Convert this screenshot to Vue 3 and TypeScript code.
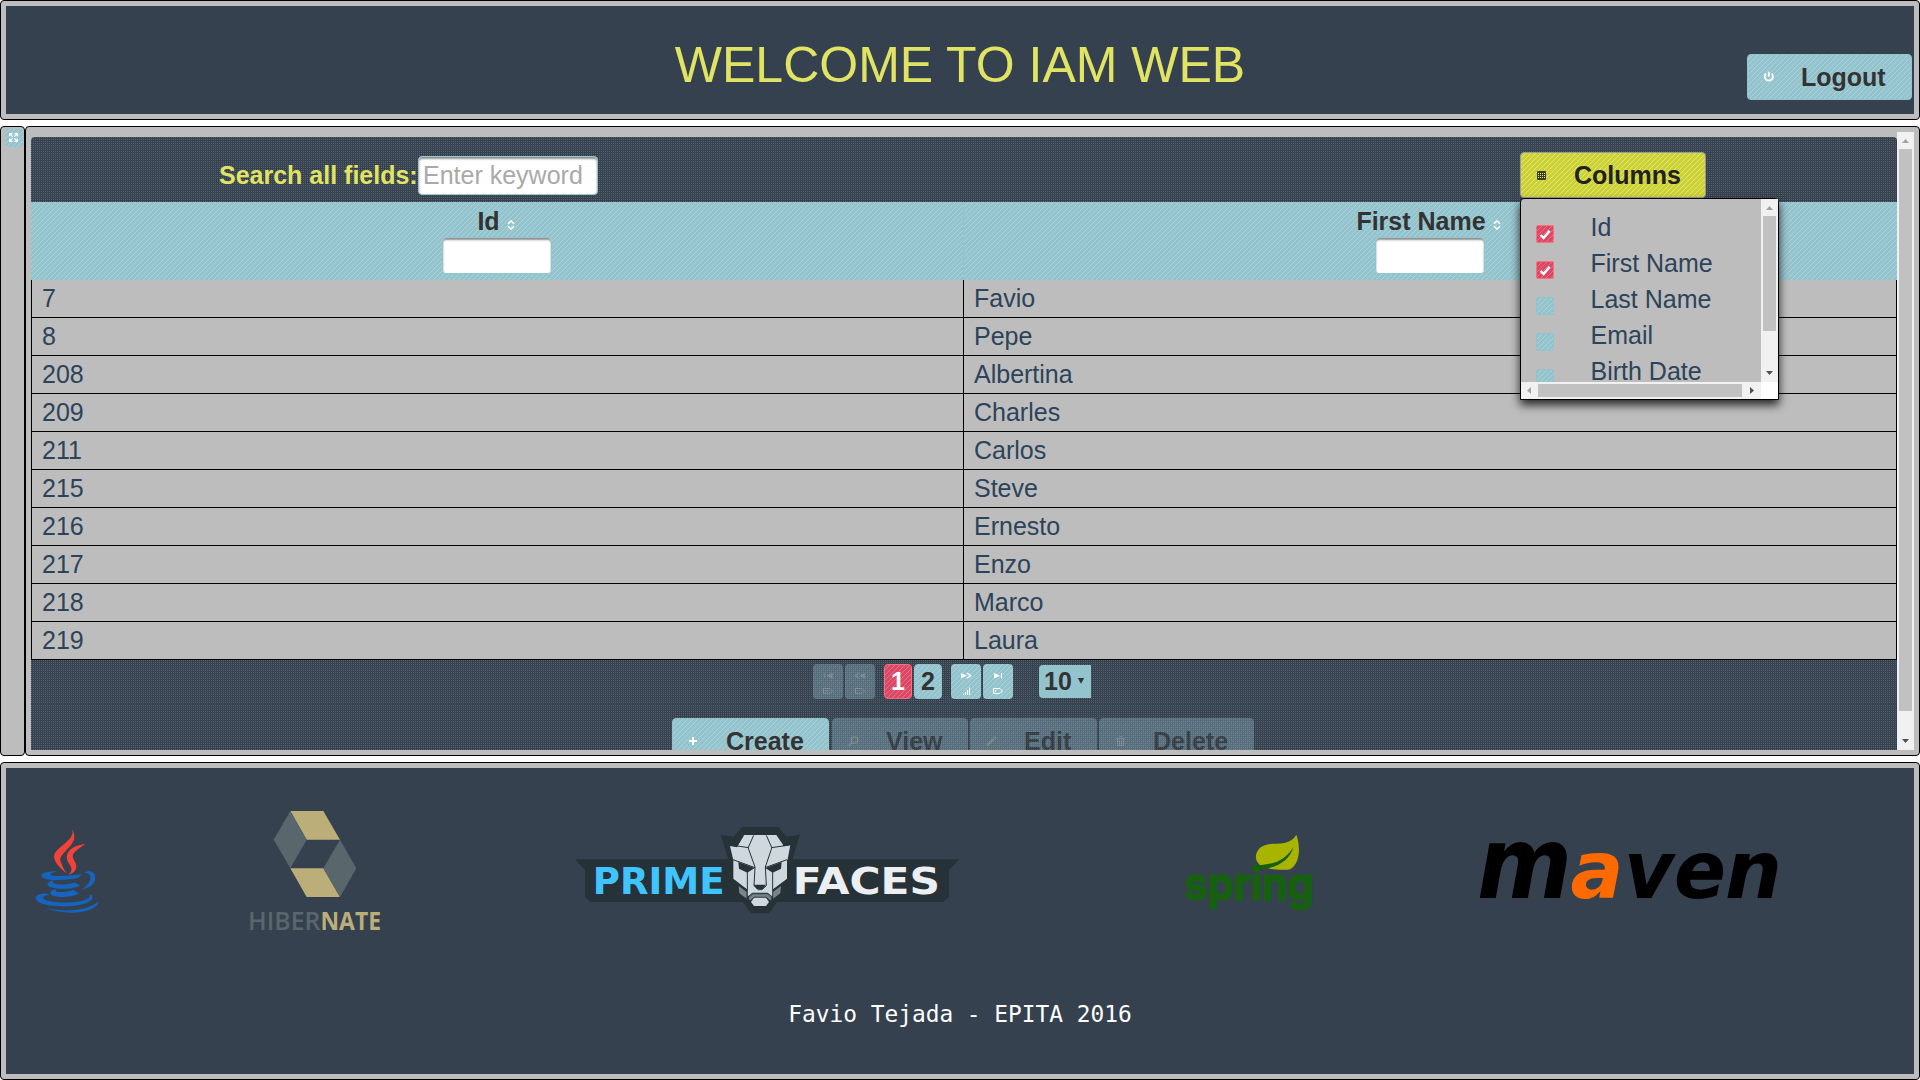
<script setup lang="ts">
interface Person {
  id: number
  firstName: string
}

interface ColumnOption {
  label: string
  checked: boolean
}

const people: Person[] = [
  { id: 7, firstName: 'Favio' },
  { id: 8, firstName: 'Pepe' },
  { id: 208, firstName: 'Albertina' },
  { id: 209, firstName: 'Charles' },
  { id: 211, firstName: 'Carlos' },
  { id: 215, firstName: 'Steve' },
  { id: 216, firstName: 'Ernesto' },
  { id: 217, firstName: 'Enzo' },
  { id: 218, firstName: 'Marco' },
  { id: 219, firstName: 'Laura' },
]

const columnOptions: ColumnOption[] = [
  { label: 'Id', checked: true },
  { label: 'First Name', checked: true },
  { label: 'Last Name', checked: false },
  { label: 'Email', checked: false },
  { label: 'Birth Date', checked: false },
]

const headers: string[] = ['Id', 'First Name']
</script>

<template>
  <div class="page">
    <header class="unit north">
      <div class="north-body">
        <h1 class="title">WELCOME TO IAM WEB</h1>
        <button class="btn logout" type="button">
          <svg class="btn-icon" viewBox="0 0 16 16">
            <path d="M5 4.600a4.100 4.100 0 1 0 5.600 0M7.800 2.800v5" fill="none" stroke="#fff" stroke-width="1.800" />
          </svg>
          Logout
        </button>
      </div>
    </header>

    <div class="middle">
      <aside class="unit west">
        <div class="expander diag">
          <svg viewBox="0 0 16 16" width="16" height="16">
            <path d="M3 3h4L3 7zM12 3v4L8 3zM3 12V8l4 4zM12 12H8l4-4z" fill="#fff" />
            <path d="M4 4l2.600 2.600M11 4L8.400 6.600M4 11l2.600-2.600M11 11L8.400 8.400" stroke="#fff" stroke-width="1.200" />
          </svg>
        </div>
      </aside>

      <main class="unit center">
        <div class="content">
          <div class="facet dots">
            <label class="search-label" for="search">Search all fields:</label>
            <input id="search" class="search" type="text" placeholder="Enter keyword" />
            <div class="columns">
              <button class="btn hover" type="button">
                <svg class="btn-icon" viewBox="0 0 16 16">
                  <rect x="3" y="4" width="9" height="9" rx="1" fill="#3c3f20" />
                  <path
                    d="M4 6.500h7M4 8.500h7M4 10.500h7"
                    stroke="#e3e690"
                    stroke-width="1"
                    stroke-dasharray="1 1"
                    shape-rendering="crispEdges"
                  />
                </svg>
                Columns
              </button>
              <div class="toggler">
                <ul class="toggler-list">
                  <li v-for="option in columnOptions" :key="option.label">
                    <span class="check diag" :class="{ on: option.checked }">
                      <svg v-if="option.checked" viewBox="0 0 16 16" width="16" height="16">
                        <path d="M3.600 9l3 3 6-7.200" fill="none" stroke="#fff" stroke-width="2.400" />
                      </svg>
                    </span>
                    <span class="option-label">{{ option.label }}</span>
                  </li>
                </ul>
                <div class="bar vertical">
                  <svg viewBox="0 0 17 17"><path d="M5 11h7L8.500 7z" fill="#a3a3a3" /></svg>
                  <div class="thumb short"></div>
                  <svg class="end" viewBox="0 0 17 17"><path d="M5 6h7l-3.500 4z" fill="#505050" /></svg>
                </div>
                <div class="bar horizontal">
                  <svg viewBox="0 0 17 17"><path d="M10 5v7L6 8.500z" fill="#a3a3a3" /></svg>
                  <div class="thumb wide"></div>
                  <svg class="end" viewBox="0 0 17 17"><path d="M6 5v7l4-3.500z" fill="#505050" /></svg>
                </div>
                <div class="corner"></div>
              </div>
            </div>
          </div>

          <div class="head">
            <div v-for="header in headers" :key="header" class="head-cell diag">
              <div class="head-title">
                {{ header
                }}<svg class="sort" viewBox="0 0 8 10" width="8" height="10">
                  <path d="M1 3.800L4 .9l3 2.900M1 6.200l3 2.900 3-2.900" fill="none" stroke="#fff" stroke-width="1.500" />
                </svg>
              </div>
              <input class="filter" type="text" />
            </div>
          </div>

          <div class="rows">
            <div v-for="person in people" :key="person.id" class="row">
              <div class="cell">{{ person.id }}</div>
              <div class="cell">{{ person.firstName }}</div>
            </div>
          </div>

          <div class="pager dots">
            <span class="page-btn diag disabled">
              <svg viewBox="0 0 30 35">
                <path d="M11.500 9v5" stroke="#fff" />
                <path d="M19.500 9v5.500l-5.500-2.700z" fill="#fff" stroke="#fff" stroke-width=".5" />
                <path d="M10.500 24.500h6.500l2.500 2.500-2.500 2.500h-6.500zM13 26v2M15 26v2" fill="none" stroke="#fff" />
              </svg>
            </span>
            <span class="page-btn diag disabled">
              <svg viewBox="0 0 30 35">
                <path d="M14 9l-3.500 2.700L14 14.300" fill="none" stroke="#fff" stroke-width="1.300" />
                <path d="M20 9v5.500l-6-2.700z" fill="#fff" />
                <path d="M10.500 24.500h6.500l2.500 2.500-2.500 2.500h-6.500z" fill="none" stroke="#fff" />
              </svg>
            </span>
            <span class="page-btn num diag active">1</span>
            <span class="page-btn num diag">2</span>
            <span class="page-btn next diag">
              <svg viewBox="0 0 30 35">
                <path d="M10 9v5.500l6-2.700z" fill="#fff" />
                <path d="M16 9l3.800 2.700L16 14.300" fill="none" stroke="#fff" stroke-width="1.300" />
                <path d="M12.500 31v-1.500M14.500 31v-3M16.500 31v-5M18.500 31v-7.500" stroke="#fff" />
              </svg>
            </span>
            <span class="page-btn diag">
              <svg viewBox="0 0 30 35">
                <path d="M11 9v5.500l6-2.700z" fill="#fff" />
                <path d="M18.500 9v5.500" stroke="#fff" />
                <path d="M10.500 24.500h6.500l2.500 2.500-2.500 2.500h-6.500zM12.500 26v2" fill="none" stroke="#fff" />
              </svg>
            </span>
            <span class="size">10<svg viewBox="0 0 8 7"><path d="M.8 1h6.400L4 6.800z" fill="#333" /></svg></span>
          </div>

          <div class="actions dots">
            <button class="btn create" type="button">
              <svg class="btn-icon" viewBox="0 0 16 16">
                <path d="M7 4v8M3 8h8" stroke="#fff" stroke-width="2" />
              </svg>
              Create
            </button>
            <button class="btn view" type="button" disabled>
              <svg class="btn-icon" viewBox="0 0 16 16">
                <circle cx="8.500" cy="7" r="3.200" fill="none" stroke="#fff" stroke-width="1.300" />
                <path d="M6.200 9.500L2.500 13" stroke="#fff" stroke-width="1.600" />
              </svg>
              View
            </button>
            <button class="btn edit" type="button" disabled>
              <svg class="btn-icon" viewBox="0 0 16 16">
                <path d="M3 12.500l6.500-6.500M10.200 5.300l1.500-1.500" stroke="#fff" stroke-width="2" />
              </svg>
              Edit
            </button>
            <button class="btn delete" type="button" disabled>
              <svg class="btn-icon" viewBox="0 0 16 16">
                <path d="M4.500 6v6.500h6V6M3 5.500h9M6 3.500h3M6.500 7v5M8.500 7v5" fill="none" stroke="#fff" />
              </svg>
              Delete
            </button>
          </div>
        </div>

        <div class="bar vertical main-bar">
          <svg viewBox="0 0 17 17"><path d="M5 11h7L8.500 7z" fill="#a3a3a3" /></svg>
          <div class="thumb tall"></div>
          <svg class="end" viewBox="0 0 17 17"><path d="M5 6h7l-3.500 4z" fill="#505050" /></svg>
        </div>
      </main>
    </div>

    <footer class="unit south">
      <div class="south-body">
        <div class="logos">
          <svg class="java" viewBox="0 0 48 48">
            <g fill="#f44336">
              <path d="M23.65,24.898c-0.998-1.609-1.722-2.943-2.725-5.455C19.229,15.2,31.24,11.366,26.37,3.999c2.111,5.089-7.577,8.235-8.477,12.473C17.07,20.37,23.645,24.898,23.65,24.898z" />
              <path d="M23.878,17.27c-0.192,2.516,2.229,3.857,2.299,5.695c0.056,1.496-1.447,2.743-1.447,2.743s2.728-0.536,3.579-2.818c0.945-2.534-1.834-4.269-1.548-6.298c0.267-1.938,6.031-5.543,6.031-5.543S24.311,11.611,23.878,17.27z" />
            </g>
            <g fill="#1565c0">
              <path d="M32.084 25.055c1.754-.394 3.233.723 3.233 2.01 0 2.901-4.021 5.643-4.021 5.643s6.225-.742 6.225-5.505C37.521 24.053 34.464 23.266 32.084 25.055zM29.129 27.395c0 0 1.941-1.383 2.458-1.902-4.763 1.011-15.638 1.147-15.638.269 0-.809 3.507-1.638 3.507-1.638s-7.773-.112-7.773 2.181C11.683 28.695 21.858 28.866 29.129 27.395z" />
              <path d="M27.935 29.571c-4.509 1.499-12.814 1.02-10.354-.993-1.198 0-2.974.963-2.974 1.889 0 1.857 8.982 3.291 15.63.572L27.935 29.571z" />
              <path d="M18.686 32.739c-1.636 0-2.695 1.054-2.695 1.822 0 2.391 9.76 2.632 13.627.205l-2.458-1.632C24.271 34.404 17.014 34.579 18.686 32.739z" />
              <path d="M36.281 36.632c0-.936-1.055-1.377-1.433-1.588 2.228 5.373-22.317 4.956-22.317 1.784 0-.721 1.807-1.427 3.477-1.093l-1.42-.839C11.26 34.374 9 35.837 9 37.017 9 42.52 36.281 42.255 36.281 36.632z" />
              <path d="M39 38.604c-4.146 4.095-14.659 5.587-25.231 3.057C24.341 46.164 38.95 43.628 39 38.604z" />
            </g>
          </svg>

          <svg class="hibernate" viewBox="240 20 150 130">
            <g transform="scale(.33333)">
              <path d="M871 63h99l50 86H920zM871 235h99l50 86H920z" fill="#bcae79" />
              <path d="M871 63l49 86-49 86-50-86zM1020 149l49 86-49 86-50-86z" fill="#59666c" />
            </g>
            <text x="248" y="139.700" class="hib" fill="#59666c" textLength="72.500" lengthAdjust="spacingAndGlyphs">HIBER</text>
            <text x="320.500" y="139.700" class="hib nate" fill="#bcae79" textLength="60.500" lengthAdjust="spacingAndGlyphs">NATE</text>
          </svg>

          <svg class="primefaces" viewBox="0 0 1260 420">
            <path
              d="M45 178H505L482 104l39 6 26-29h107l26 29 40-6-23 74h501l-31 32v81l-17 15H652l-25 34h-54l-25-34H92l-17-15v-81z"
              fill="#263238"
            />
            <path d="M536 258l24 18v20l-22-16zM663 258l-24 18v20l22-16zM566 292l12-12h45l12 12-12 8H578z" fill="#78858b" />
            <path
              d="M551 105h98l21 31-2 3 23-4-8 43-2 3v55l-42 32v23l-16-13h-46l-16 13v-23l-41-32v-55l-10-43 21 4z"
              fill="#cfd8dc"
            />
            <path
              d="M581 106l-16 36 1 6 19 53-3 56 13 12h11l13-12-3-56 18-53 1-6-16-36M512 135l54 8M634 143l56-8M519 179l66 24M681 179l-66 24M562 217v76M638 217v76M531 138l20-32"
              fill="none"
              stroke="#263238"
              stroke-width="3"
            />
            <path d="M535 186l49 18-22 14-25-12zM665 186l-49 18 22 14 25-12zM581 254h37l-10 14h-17z" fill="#263238" />
            <path d="M565 299l13-19h45l13 19-13 9H578z" fill="#263238" />
            <path d="M565 298l13-15h45l13 15-6 3-11-11H582l-11 11z" fill="#78858b" />
            <path d="M582 293h36l9 13-9 12h-36l-9-12z" fill="#cfd8dc" />
            <text x="98" y="283" class="pf" fill="#40c4ff" textLength="396" lengthAdjust="spacingAndGlyphs">PRIME</text>
            <text x="698" y="283" class="pf" fill="#eceff1" textLength="442" lengthAdjust="spacingAndGlyphs">FACES</text>
          </svg>

          <svg class="spring" viewBox="1180 830 140 90">
            <text x="1184.500" y="900" class="spring-text" textLength="129.500" lengthAdjust="spacingAndGlyphs">spring</text>
            <g transform="translate(1160 800) scale(.42088 .33333)">
              <path
                d="M324 104c-8 18-24 27-48 27-29 0-45 12-48 36-1 12 2 20 10 29 18 12 38 14 66 13 14-1 25-26 26-53 1-20-2-38-6-52z"
                fill="#a8b400"
              />
              <path d="M238 195c38-3 60-16 79-54-8 36-33 59-68 65l-9 2z" fill="#16600f" />
              <ellipse cx="230" cy="204" rx="9" ry="9" fill="#16600f" />
            </g>
          </svg>

          <svg class="maven" viewBox="1470 830 320 80">
            <text x="1477" y="898" class="mvn" font-size="100" textLength="95" lengthAdjust="spacingAndGlyphs">m</text>
            <text x="1570.500" y="898" class="mvn orange" font-size="80" textLength="53" lengthAdjust="spacingAndGlyphs">a</text>
            <text x="1624" y="898" class="mvn" font-size="80" textLength="50" lengthAdjust="spacingAndGlyphs">v</text>
            <text x="1674" y="898" class="mvn" font-size="80" textLength="52" lengthAdjust="spacingAndGlyphs">e</text>
            <text x="1725" y="898" class="mvn" font-size="80" textLength="57" lengthAdjust="spacingAndGlyphs">n</text>
          </svg>
        </div>
        <p class="credit">Favio Tejada - EPITA 2016</p>
      </div>
    </footer>
  </div>
</template>

<style>
html,
body {
  margin: 0;
  background: #fff;
  overflow: hidden;
}
</style>

<style scoped>
* {
  box-sizing: border-box;
}

.page {
  width: 1920px;
  height: 1080px;
  display: flex;
  flex-direction: column;
  gap: 6px;
  font: 25px/28px "Liberation Sans", Arial, sans-serif;
  color: #2c4359;
}

.unit {
  background: #bdbdbd;
  border: 1px solid #000;
  border-radius: 4px;
  padding: 5px;
}

.diag {
  background-color: #93c3cd;
  background-image: linear-gradient(135deg, transparent 45%, rgba(255, 255, 255, 0.23) 45% 55%, transparent 55%);
  background-size: 5px 5px;
}

.dots {
  background-color: #35414f;
  background-image: linear-gradient(135deg, rgba(255, 255, 255, 0.18) 37%, transparent 37%);
  background-size: 2px 2px;
}

.north {
  height: 120px;
}

.north-body {
  height: 108px;
  background: #35414f;
  display: grid;
  grid-template-columns: 1fr auto 1fr;
  align-items: start;
}

.title {
  grid-column: 2;
  margin: 31px 0 0;
  font-size: 50px;
  line-height: 56px;
  font-weight: 400;
  color: #e1e463;
  white-space: nowrap;
}

.btn {
  height: 46px;
  padding: 0 0 0 16px;
  display: flex;
  align-items: center;
  border: 1px solid #93c3cd;
  border-radius: 4px;
  background-color: #93c3cd;
  background-image: linear-gradient(135deg, transparent 45%, rgba(255, 255, 255, 0.23) 45% 55%, transparent 55%);
  background-size: 5px 5px;
  color: #333;
  font: bold 25px/44px "Liberation Sans", Arial, sans-serif;
  white-space: nowrap;
  flex: none;
}

.btn:disabled {
  opacity: 0.35;
}

.btn-icon {
  width: 16px;
  height: 16px;
  margin: 0 24px 0 -3px;
  flex: none;
}

.logout {
  grid-column: 3;
  justify-self: end;
  width: 165px;
  margin: 48px 2px 0 0;
}

.middle {
  height: 630px;
  display: flex;
}

.west {
  width: 25px;
  padding: 2px 0 0 4px;
}

.expander {
  width: 18px;
  height: 18px;
  padding: 1px;
  border-radius: 4px;
}

.expander svg {
  display: block;
}

.center {
  flex: 1;
  display: flex;
}

.content {
  width: 1866px;
  height: 613px;
  margin-top: 5px;
  overflow: hidden;
}

.facet {
  height: 65px;
  padding: 15px 0 0 188px;
  display: flex;
  align-items: flex-start;
  border-radius: 4px 4px 0 0;
}

.search-label {
  width: 199px;
  line-height: 46px;
  font-weight: bold;
  color: #e1e463;
  white-space: nowrap;
}

.search,
.filter {
  border: 1px solid #93c3cd;
  border-radius: 4px;
  background: #fff;
  box-shadow: inset 0 2px 2px #8f8f8f;
  font: 25px/28px "Liberation Sans", Arial, sans-serif;
  color: #222;
  outline: none;
}

.search {
  width: 180px;
  height: 39px;
  margin-top: 4px;
  padding: 0 4px;
}

.search::placeholder {
  color: #a9a9a9;
  opacity: 1;
}

.columns {
  position: relative;
  margin-left: 922px;
  z-index: 2;
}

.hover {
  width: 186px;
  border-color: #999;
  background-color: #ccd232;
  background-image: linear-gradient(135deg, transparent 45%, rgba(255, 255, 255, 0.4) 45% 55%, transparent 55%);
  color: #212121;
}

.toggler {
  position: absolute;
  top: 46px;
  left: 0;
  width: 259px;
  height: 202px;
  border: 1px solid #000;
  border-radius: 4px 4px 0 0;
  background: #bdbdbd;
  box-shadow: 0 5px 10px rgba(0, 0, 0, 0.8);
  display: grid;
  grid-template: 183px 17px / 240px 17px;
}

.toggler-list {
  list-style: none;
  margin: 0;
  padding: 14px 0 0 15px;
  overflow: hidden;
}

.toggler-list li {
  height: 36px;
  display: flex;
}

.check {
  width: 18px;
  height: 18px;
  margin: 12px 36px 0 0;
  border: 1px solid #93c3cd;
  border-radius: 2px;
}

.check svg {
  display: block;
}

.check.on {
  background-color: #db4865;
  border-color: #ff6b7f;
}

.option-label {
  padding-left: 0.500px;
  white-space: nowrap;
}

.bar {
  background: #f1f1f1;
  display: flex;
}

.bar svg {
  width: 17px;
  height: 17px;
  display: block;
  flex: none;
}

.vertical {
  width: 17px;
  flex-direction: column;
  align-items: center;
}

.horizontal {
  height: 17px;
  align-items: center;
}

.bar .end {
  margin-top: auto;
}

.horizontal .end {
  margin: 0 0 0 auto;
}

.thumb {
  width: 13px;
  height: 13px;
  background: #c1c1c1;
}

.thumb.short {
  height: 115px;
}

.thumb.wide {
  width: 204px;
}

.thumb.tall {
  height: 562px;
}

.corner {
  background: #fff;
}

.main-bar {
  height: 618px;
}

.head {
  display: flex;
  height: 78px;
}

.head-cell {
  width: 932px;
  padding-top: 5px;
  display: flex;
  flex-direction: column;
  align-items: center;
}

.head-cell + .head-cell {
  width: 934px;
  padding-right: 2px;
  border-left: 1px solid #93c3cd;
}

.head-title {
  padding-left: 2px;
  font-weight: bold;
  color: #333;
  white-space: nowrap;
}

.sort {
  margin: 0 4px 0 7px;
}

.filter {
  width: 110px;
  height: 37px;
  margin-top: 2px;
}

.rows {
  border-left: 1px solid #000;
  border-right: 1px solid #000;
}

.row {
  display: flex;
  height: 38px;
  border-bottom: 1px solid #000;
}

.cell {
  width: 931px;
  padding: 4px 0 0 10px;
}

.cell + .cell {
  flex: 1;
  border-left: 1px solid #000;
}

.pager {
  height: 44px;
  padding: 4px 0 0 782px;
  display: flex;
  gap: 2px;
  border-right: 1px solid #2c4359;
}

.page-btn {
  width: 30px;
  height: 35px;
  border-radius: 4px;
  flex: none;
}

.page-btn svg {
  width: 30px;
  height: 35px;
  display: block;
}

.page-btn.disabled {
  opacity: 0.35;
}

.page-btn.num {
  width: 28px;
  text-align: center;
  font-weight: bold;
  color: #333;
  border: 1px solid #93c3cd;
  line-height: 32px;
}

.num.active {
  margin-left: 7px;
  background-color: #db4865;
  border-color: #ff6b7f;
}

.page-btn.num.active {
  border-color: #ff6b7f;
  color: #fff;
}

.next {
  margin-left: 7px;
}

.size {
  width: 52px;
  height: 33px;
  margin: 1px 0 0 24px;
  padding-left: 5px;
  border-radius: 4px 0 0 4px;
  background: #93c3cd;
  color: #333;
  font-weight: bold;
  line-height: 32px;
  display: flex;
}

.size svg {
  width: 8px;
  height: 7px;
  margin: 12px 0 0 5px;
}

.actions {
  height: 80px;
  padding: 13px 0 0 641px;
  display: flex;
  border-top: 1px solid #2c4359;
  border-right: 1px solid #2c4359;
}

.create {
  width: 157px;
  margin-right: 3px;
}

.view {
  width: 136px;
  margin-right: 2px;
}

.edit {
  width: 127px;
  margin-right: 2px;
}

.delete {
  width: 155px;
}

.south {
  height: 318px;
}

.south-body {
  height: 306px;
  background: #35414f;
}

.logos {
  height: 230px;
  display: flex;
  align-items: flex-start;
}

.logos svg {
  display: block;
  flex: none;
}

.java {
  width: 100px;
  height: 100px;
  margin: 53px 0 0 11px;
}

.hibernate {
  width: 150px;
  height: 130px;
  margin: 42px 0 0 123px;
}

.primefaces {
  width: 420px;
  height: 140px;
  margin: 32px 0 0 170px;
}

.spring {
  width: 140px;
  height: 90px;
  margin: 62px 0 0 200px;
}

.maven {
  width: 320px;
  height: 80px;
  margin: 62px 0 0 150px;
}

.hib {
  font: 600 25px "Open Sans", sans-serif;
}

.nate {
  font-weight: 700;
}

.pf {
  font: bold 111px "DejaVu Sans", sans-serif;
}

.spring-text {
  font: 700 45px Inter, sans-serif;
  fill: #16600f;
  stroke: #16600f;
  stroke-width: 1.500px;
  stroke-linejoin: round;
}

.mvn {
  font-family: "DejaVu Sans", sans-serif;
  font-weight: 700;
  font-style: italic;
  fill: #000;
}

.orange {
  fill: #ff6a00;
}

.credit {
  margin: 0;
  padding-top: 2px;
  text-align: center;
  font: 22.830px/28px "DejaVu Sans Mono", monospace;
  color: #fff;
}
</style>
